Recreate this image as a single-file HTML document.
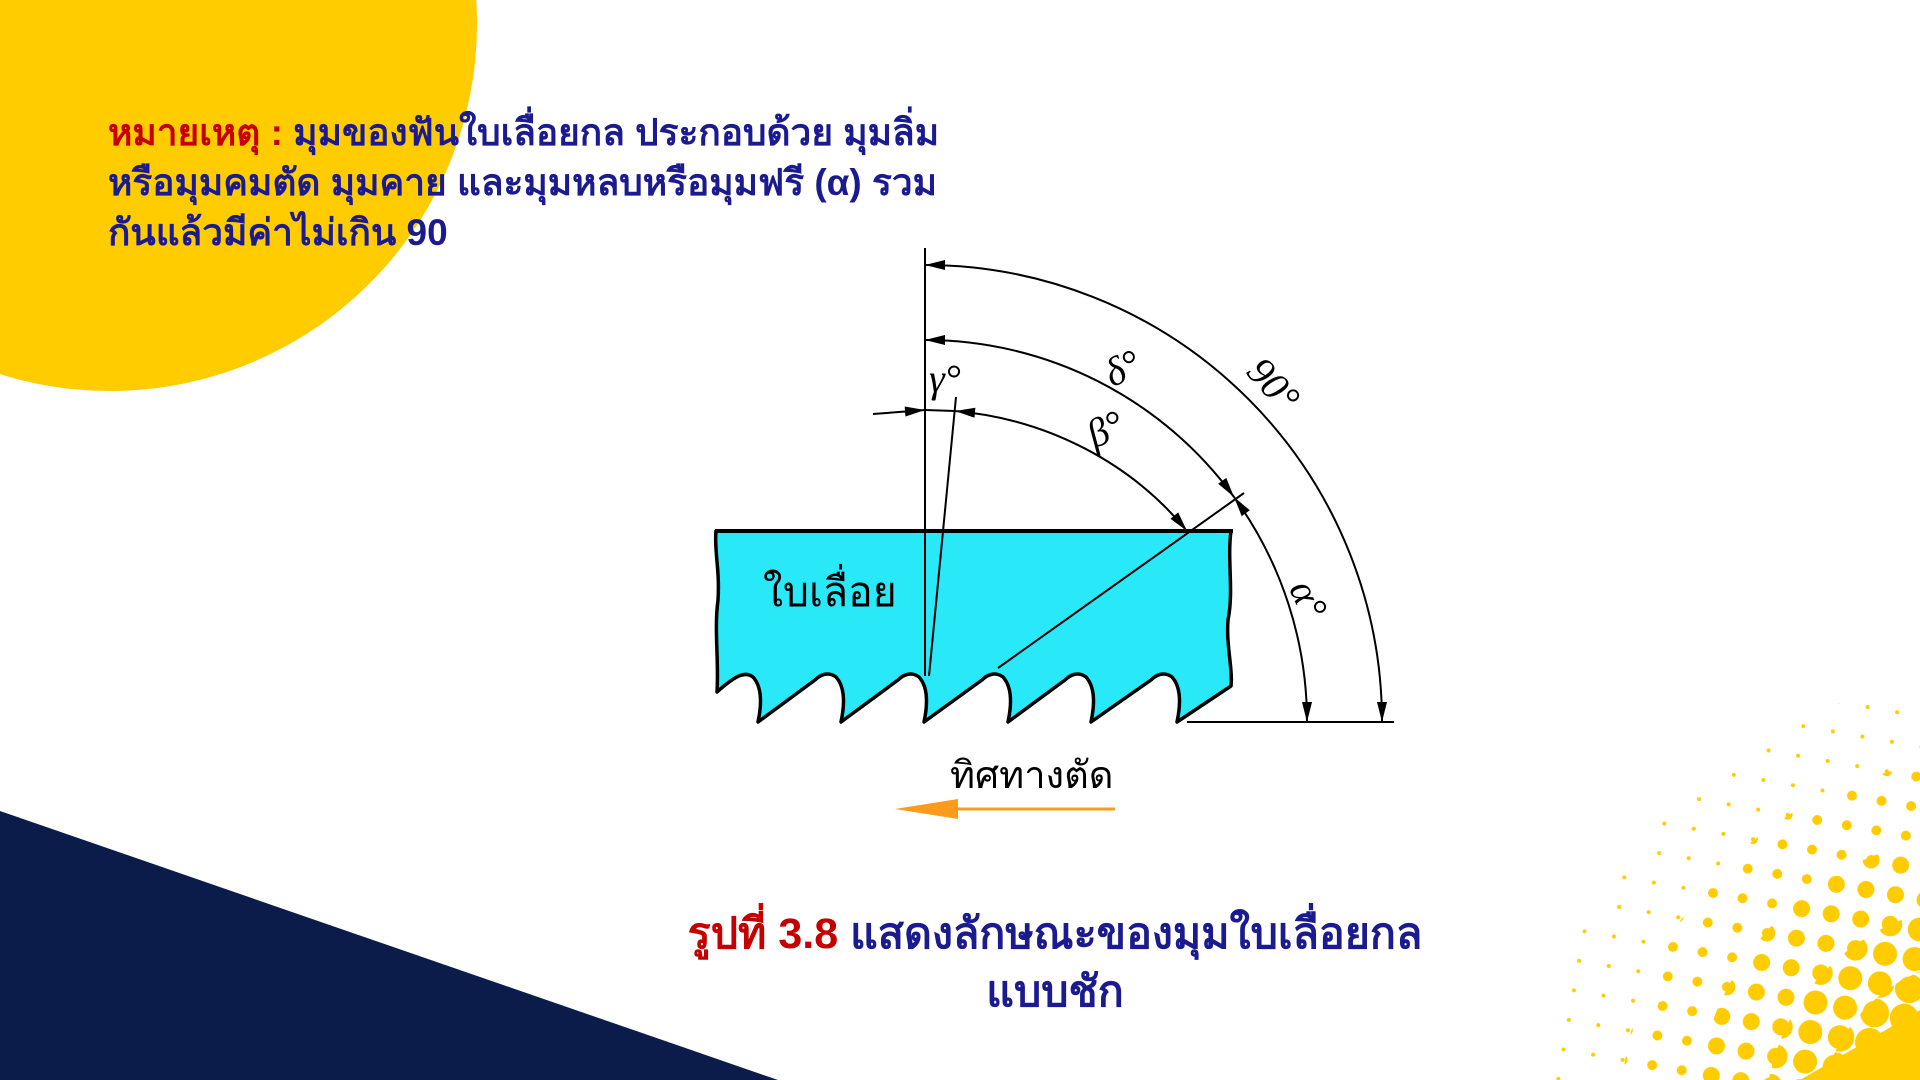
<!DOCTYPE html>
<html><head><meta charset="utf-8"><style>
html,body{margin:0;padding:0;}
body{width:1920px;height:1080px;position:relative;overflow:hidden;background:#fff;font-family:"Liberation Sans",sans-serif;}
.note{position:absolute;left:108px;top:108px;font-size:37px;font-weight:bold;line-height:50px;color:#1b1b8f;white-space:nowrap;}
.red{color:#c50000;}
.cap{position:absolute;left:590px;width:930px;top:905px;text-align:center;font-size:43px;font-weight:bold;line-height:58px;color:#1b1b8f;}
svg{position:absolute;left:0;top:0;}
</style></head><body>
<svg width="1920" height="1080" viewBox="0 0 1920 1080">
<defs>
<pattern id="p1" width="30" height="30" patternUnits="userSpaceOnUse" patternTransform="translate(1965,1105) rotate(10)"><circle cx="15" cy="15" r="2" fill="#ffcc00"/></pattern>
<pattern id="p2" width="30" height="30" patternUnits="userSpaceOnUse" patternTransform="translate(1965,1105) rotate(10)"><circle cx="15" cy="15" r="5" fill="#ffcc00"/></pattern>
<pattern id="p3" width="30" height="30" patternUnits="userSpaceOnUse" patternTransform="translate(1965,1105) rotate(10)"><circle cx="15" cy="15" r="8.5" fill="#ffcc00"/></pattern>
<pattern id="p4" width="30" height="30" patternUnits="userSpaceOnUse" patternTransform="translate(1965,1105) rotate(10)"><circle cx="15" cy="15" r="12" fill="#ffcc00"/></pattern>
<pattern id="p5" width="30" height="30" patternUnits="userSpaceOnUse" patternTransform="translate(1965,1105) rotate(10)"><circle cx="15" cy="15" r="14.5" fill="#ffcc00"/></pattern>
<marker id="ah" viewBox="0 0 20 10" refX="20" refY="5" markerWidth="22" markerHeight="10" markerUnits="userSpaceOnUse" orient="auto-start-reverse"><path d="M0,0 L20,5 L0,10 Z" fill="#000"/></marker>
</defs>
<circle cx="110" cy="24" r="367" fill="#ffcc00"/>
<path d="M0,811 L778,1080 L0,1080 Z" fill="#0b1c4b"/>
<circle cx="1980" cy="1120" r="440" fill="url(#p1)"/>
<circle cx="1980" cy="1120" r="360" fill="url(#p2)"/>
<circle cx="1980" cy="1120" r="285" fill="url(#p3)"/>
<circle cx="1980" cy="1120" r="215" fill="url(#p4)"/>
<circle cx="1980" cy="1120" r="160" fill="url(#p5)"/>
<path d="M1800,1080 L1920,1010 L1920,1080 Z" fill="#ffcc00"/>
<circle cx="1980" cy="1120" r="120" fill="#ffcc00"/>

<!-- blade -->
<path d="M716,531 L1231,531 C1227,560 1234,590 1228,620 C1226,645 1233,670 1231,686 L1177,722
C1180,708 1182,688 1172,677 C1164,671 1156,675 1151,680 L1091,722
C1094,708 1096,688 1086,677 C1078,671 1070,675 1065,680 L1008,722
C1011,708 1013,688 1003,677 C995,671 987,675 982,680 L924,722
C927,708 929,688 919,677 C911,671 903,675 898,680 L841,722
C844,708 846,688 836,677 C828,671 820,675 815,680 L758,722
C761,708 763,688 753,677 C745,671 736,675 717,692
C719,660 714,630 718,600 C720,570 714,550 716,531 Z" fill="#29e9f9" stroke="#000" stroke-width="3.5" stroke-linejoin="round"/>
<line x1="715" y1="531" x2="1233" y2="531" stroke="#000" stroke-width="4"/>
<line x1="925" y1="248" x2="925" y2="676" stroke="#000" stroke-width="2"/>
<line x1="956" y1="397" x2="929" y2="676" stroke="#000" stroke-width="2"/>
<line x1="998" y1="668" x2="1244" y2="493" stroke="#000" stroke-width="2"/>
<line x1="1187" y1="722" x2="1394" y2="722" stroke="#000" stroke-width="2"/>
<!-- arcs -->
<g fill="none" stroke="#000" stroke-width="2">
<path d="M925,265 A457,457 0 0 1 1382,722" marker-start="url(#ah)" marker-end="url(#ah)"/>
<path d="M925,340 A382,382 0 0 1 1234,497" marker-start="url(#ah)" marker-end="url(#ah)"/>
<path d="M1234,497 A382,382 0 0 1 1307,722" marker-start="url(#ah)" marker-end="url(#ah)"/>
<path d="M955,411 A331,312 0 0 1 1187,531" marker-start="url(#ah)" marker-end="url(#ah)"/>
<path d="M873,414 L925,410" marker-end="url(#ah)"/>
<path d="M925,410 L955,411"/>
</g>
<!-- labels -->
<g font-family="'Liberation Serif',serif" font-style="italic" font-size="40" fill="#000">
<text x="929" y="392">γ°</text>
<text x="1104" y="380" transform="rotate(-25 1125 365)">δ°</text>
<text x="1086" y="440" transform="rotate(-25 1110 425)">β°</text>
<text x="1246" y="398" transform="rotate(48 1274 384)">90°</text>
<text x="1288" y="617" transform="rotate(65 1311 603)">α°</text>
</g>
<text x="763" y="606" font-size="41" fill="#000" font-family="sans-serif">ใบเลื่อย</text>
<text x="950" y="788" font-size="38" fill="#000" font-family="sans-serif">ทิศทางตัด</text>
<line x1="920" y1="809" x2="1115" y2="809" stroke="#ff9a1a" stroke-width="3"/>
<path d="M895,809 L958,799 L958,819 Z" fill="#ff9a1a"/>
</svg>
<div class="note"><span class="red">หมายเหตุ :</span> มุมของฟันใบเลื่อยกล ประกอบด้วย มุมลิ่ม<br>หรือมุมคมตัด มุมคาย และมุมหลบหรือมุมฟรี (α) รวม<br>กันแล้วมีค่าไม่เกิน 90</div>
<div class="cap"><span class="red">รูปที่ 3.8</span> แสดงลักษณะของมุมใบเลื่อยกล<br>แบบชัก</div>
</body></html>
